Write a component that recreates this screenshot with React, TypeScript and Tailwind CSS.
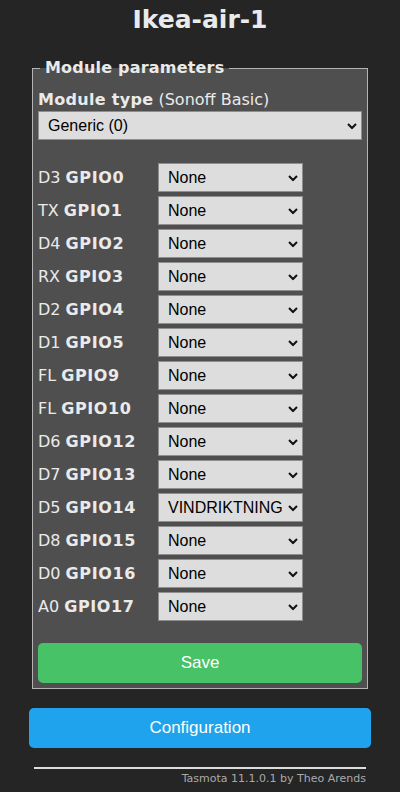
import React from 'react';

const pins: [string, string, string][] = [
  ['D3', 'GPIO0', 'None'],
  ['TX', 'GPIO1', 'None'],
  ['D4', 'GPIO2', 'None'],
  ['RX', 'GPIO3', 'None'],
  ['D2', 'GPIO4', 'None'],
  ['D1', 'GPIO5', 'None'],
  ['FL', 'GPIO9', 'None'],
  ['FL', 'GPIO10', 'None'],
  ['D6', 'GPIO12', 'None'],
  ['D7', 'GPIO13', 'None'],
  ['D5', 'GPIO14', 'VINDRIKTNING'],
  ['D8', 'GPIO15', 'None'],
  ['D0', 'GPIO16', 'None'],
  ['A0', 'GPIO17', 'None'],
];

const Chevron = () => (
  <svg className="pointer-events-none absolute right-[5px] top-1/2 -translate-y-1/2" width="10" height="7" viewBox="0 0 10 7">
    <path d="M1 1.5 L5 5.5 L9 1.5" fill="none" stroke="#111" strokeWidth="2" />
  </svg>
);

const Select: React.FC<{ value: string; className?: string }> = ({ value, className }) => (
  <div className={`relative h-[29px] ${className ?? ''}`}>
    <select
      defaultValue={value}
      className="h-full w-full appearance-none border border-[#8e8e8e] bg-[#dddddd] pl-[9px] pr-5 text-[16px] text-black outline-none font-['Liberation_Sans',Arial,sans-serif]"
    >
      <option>{value}</option>
    </select>
    <Chevron />
  </div>
);

export default function App() {
  return (
    <div className="min-h-[792px] bg-[#252525] text-[#eaeaea] font-['DejaVu_Sans',Verdana,sans-serif]">
      <div className="mx-auto w-[342px]">
        <h2 className="pt-[5px] text-center text-[25px] font-bold leading-[30px]">Ikea-air-1</h2>
        <fieldset className="mx-[3px] mt-[24px] border border-[#b4b4b4] bg-[#4f4f4f] px-[5px] pb-[5px]">
          <legend className="ml-[2px] px-[5px] text-[16px] font-bold leading-[18px] tracking-[0.2px]">Module parameters</legend>
          <div className="mt-[13px] text-[16px] leading-[20px]">
            <b className="tracking-[0.3px]">Module type</b> (Sonoff Basic)
          </div>
          <Select value="Generic (0)" className="mt-[1px]" />
          <div className="mt-[23px] flex flex-col gap-[4px]">
            {pins.map(([d, g, v]) => (
              <div key={g} className="flex items-center">
                <div className="w-[120px] text-[16px] leading-[20px]">
                  {d} <b className="tracking-[0.6px]">{g}</b>
                </div>
                <Select value={v} className="w-[145px]" />
              </div>
            ))}
          </div>
          <button className="mt-[22px] h-[40px] w-full rounded-[5px] bg-[#47c266] text-[17px] text-white font-['Liberation_Sans',Arial,sans-serif]">
            Save
          </button>
        </fieldset>
        <button className="mt-[19px] h-[40px] w-full rounded-[5px] bg-[#1fa3ec] text-[17px] text-white font-['Liberation_Sans',Arial,sans-serif]">
          Configuration
        </button>
        <div className="mx-[5px] mt-[19px] border-t-2 border-[#dddddd]" />
        <div className="mr-[5px] mt-[3px] text-right text-[11px] leading-[14px] text-[#aaaaaa]">
          Tasmota 11.1.0.1 by Theo Arends
        </div>
      </div>
    </div>
  );
}
